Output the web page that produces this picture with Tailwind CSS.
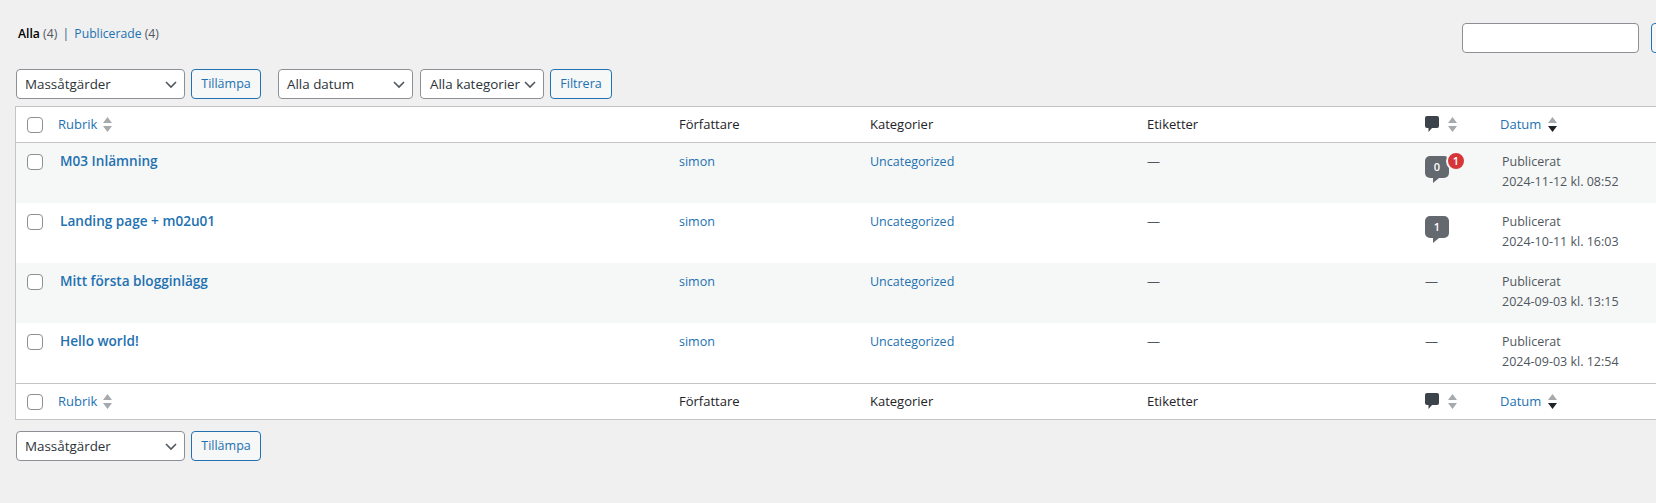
<!DOCTYPE html>
<html lang="sv">

<head>
    <meta charset="UTF-8">
    <script src="https://cdn.jsdelivr.net/npm/@tailwindcss/browser@4"></script>
    <title>Inlägg</title>
</head>

<body class="bg-[#f0f0f1] overflow-hidden h-[503px] font-['Open_Sans',sans-serif] text-[13px] text-[#3c434a]">
    <main class="w-[1731px] pl-4">
        <div class="h-[69px] flex items-start justify-between">
            <div class="mt-[24px] ml-[2px] text-[12.2px] leading-5">
                <span class="font-semibold text-black">Alla</span> <span class="text-[#50575e]">(4)</span>
                <span class="text-[#2c5f8a] mx-[2px]">|</span>
                <a class="text-[#2271b1]">Publicerade</a> <span class="text-[#50575e]">(4)</span>
            </div>
            <div class="flex gap-[12px] mt-[23px]">
                <input type="text" class="w-[177px] h-[30px] bg-white border border-[#8c8f94] rounded">
                <button class="w-[80px] h-[30px] border border-[#2271b1] rounded bg-[#f6f7f7]"></button>
            </div>
        </div>

        <div class="flex items-center h-[30px] mb-[7px]">
            <div class="w-[169px] h-[30px] bg-white border border-[#8c8f94] rounded flex items-center justify-between pl-2 pr-[7px] text-[13.4px] text-[#2c3338]">
                Massåtgärder
                <svg class="w-3 h-3" viewBox="0 0 12 12" fill="none" stroke="#50575e" stroke-width="1.6"><path d="M1 4l5 5 5-5" /></svg>
            </div>
            <button class="ml-[6px] w-[70px] h-[30px] border border-[#2271b1] rounded bg-[#f6f7f7] text-[#2271b1] text-[12.5px]">Tillämpa</button>
            <div class="ml-[17px] w-[135px] h-[30px] bg-white border border-[#8c8f94] rounded flex items-center justify-between pl-2 pr-[7px] text-[13.4px] text-[#2c3338]">
                Alla datum
                <svg class="w-3 h-3" viewBox="0 0 12 12" fill="none" stroke="#50575e" stroke-width="1.6"><path d="M1 4l5 5 5-5" /></svg>
            </div>
            <div class="ml-[7px] w-[124px] h-[30px] bg-white border border-[#8c8f94] rounded flex items-center justify-between pl-[9px] pr-[7px] text-[13.4px] text-[#2c3338]">
                Alla kategorier
                <svg class="w-3 h-3" viewBox="0 0 12 12" fill="none" stroke="#50575e" stroke-width="1.6"><path d="M1 4l5 5 5-5" /></svg>
            </div>
            <button class="ml-[6px] w-[62px] h-[30px] border border-[#2271b1] rounded bg-[#f6f7f7] text-[#2271b1] text-[12.5px]">Filtrera</button>
        </div>

        <table class="-ml-px w-[1705px] table-fixed border border-[#c3c4c7] bg-white border-separate border-spacing-0">
            <colgroup>
                <col class="w-[34px]">
                <col class="w-[621px]">
                <col class="w-[191px]">
                <col class="w-[277px]">
                <col class="w-[277px]">
                <col class="w-[76px]">
                <col>
            </colgroup>
            <thead>
                <tr class="h-[36px] text-left font-normal text-[#1d2327]">
                    <th class="border-b border-[#c3c4c7] pl-[11px]"><span class="block w-4 h-4 bg-white border border-[#8c8f94] rounded"></span></th>
                    <th class="border-b border-[#c3c4c7] pl-2 font-normal">
                        <span class="flex items-center gap-[6px] text-[#2271b1]">Rubrik
                            <svg class="w-[9px] h-[15px]" viewBox="0 0 9 15" fill="#a7aaad"><path d="M4.5 0L9 6H0zM0 9h9l-4.5 6z" /></svg>
                        </span>
                    </th>
                    <th class="border-b border-[#c3c4c7] pl-2 font-normal">Författare</th>
                    <th class="border-b border-[#c3c4c7] pl-2 font-normal">Kategorier</th>
                    <th class="border-b border-[#c3c4c7] pl-2 font-normal">Etiketter</th>
                    <th class="border-b border-[#c3c4c7] pl-[9px] font-normal">
                        <span class="flex items-center gap-[9px]">
                            <svg class="w-[14px] h-[17px]" viewBox="0 0 14 17" fill="#3c434a"><path d="M2 0h10a2 2 0 0 1 2 2v8a2 2 0 0 1-2 2H7l-3.5 4v-4H2a2 2 0 0 1-2-2V2a2 2 0 0 1 2-2z" /></svg>
                            <svg class="w-[9px] h-[15px]" viewBox="0 0 9 15" fill="#a7aaad"><path d="M4.5 0L9 6H0zM0 9h9l-4.5 6z" /></svg>
                        </span>
                    </th>
                    <th class="border-b border-[#c3c4c7] pl-2 font-normal">
                        <span class="flex items-center gap-[7px] text-[#2271b1]">Datum
                            <svg class="w-[9px] h-[15px]" viewBox="0 0 9 15"><path fill="#a7aaad" d="M4.5 0L9 6H0z" /><path fill="#1d2327" d="M0 9h9l-4.5 6z" /></svg>
                        </span>
                    </th>
                </tr>
            </thead>
            <tbody class="align-top">
                <tr class="h-[60px] bg-[#f6f7f7]">
                    <td class="pl-[11px] pt-[11px]"><span class="block w-4 h-4 bg-white border border-[#8c8f94] rounded"></span></td>
                    <td class="pl-[10px] pt-[8px] font-semibold text-[#2271b1] text-[13.6px]">M03 Inlämning</td>
                    <td class="pl-2 pt-[10px] text-[#2271b1] text-[12.5px]">simon</td>
                    <td class="pl-2 pt-[10px] text-[#2271b1] text-[12.5px]">Uncategorized</td>
                    <td class="pl-2 pt-[9px] text-[#50575e]">—</td>
                    <td class="pl-[9px] pt-[13px]">
                        <div class="relative w-6">
                            <div class="w-6 h-[22px] bg-[#646970] rounded-[5px] text-white text-[11px] font-semibold flex items-center justify-center">0</div>
                            <svg class="ml-2 w-[6px] h-[5px] block" viewBox="0 0 6 5" fill="#646970"><path d="M0 0h6L0 5z" /></svg>
                            <span class="absolute -top-[5px] left-[21px] w-5 h-5 rounded-full bg-[#d63638] border-2 border-[#f6f7f7] text-white text-[11px] font-semibold flex items-center justify-center">1</span>
                        </div>
                    </td>
                    <td class="pl-[10px] pt-[9px] text-[#50575e] text-[12.5px] leading-5">Publicerat<br>2024-11-12 kl. 08:52</td>
                </tr>
                <tr class="h-[60px] bg-white">
                    <td class="pl-[11px] pt-[11px]"><span class="block w-4 h-4 bg-white border border-[#8c8f94] rounded"></span></td>
                    <td class="pl-[10px] pt-[8px] font-semibold text-[#2271b1] text-[13.6px]">Landing page + m02u01</td>
                    <td class="pl-2 pt-[10px] text-[#2271b1] text-[12.5px]">simon</td>
                    <td class="pl-2 pt-[10px] text-[#2271b1] text-[12.5px]">Uncategorized</td>
                    <td class="pl-2 pt-[9px] text-[#50575e]">—</td>
                    <td class="pl-[9px] pt-[13px]">
                        <div class="relative w-6">
                            <div class="w-6 h-[22px] bg-[#646970] rounded-[5px] text-white text-[11px] font-semibold flex items-center justify-center">1</div>
                            <svg class="ml-2 w-[6px] h-[5px] block" viewBox="0 0 6 5" fill="#646970"><path d="M0 0h6L0 5z" /></svg>
                        </div>
                    </td>
                    <td class="pl-[10px] pt-[9px] text-[#50575e] text-[12.5px] leading-5">Publicerat<br>2024-10-11 kl. 16:03</td>
                </tr>
                <tr class="h-[60px] bg-[#f6f7f7]">
                    <td class="pl-[11px] pt-[11px]"><span class="block w-4 h-4 bg-white border border-[#8c8f94] rounded"></span></td>
                    <td class="pl-[10px] pt-[8px] font-semibold text-[#2271b1] text-[13.6px]">Mitt första blogginlägg</td>
                    <td class="pl-2 pt-[10px] text-[#2271b1] text-[12.5px]">simon</td>
                    <td class="pl-2 pt-[10px] text-[#2271b1] text-[12.5px]">Uncategorized</td>
                    <td class="pl-2 pt-[9px] text-[#50575e]">—</td>
                    <td class="pl-[9px] pt-[9px] text-[#50575e]">—</td>
                    <td class="pl-[10px] pt-[9px] text-[#50575e] text-[12.5px] leading-5">Publicerat<br>2024-09-03 kl. 13:15</td>
                </tr>
                <tr class="h-[60px] bg-white">
                    <td class="pl-[11px] pt-[11px]"><span class="block w-4 h-4 bg-white border border-[#8c8f94] rounded"></span></td>
                    <td class="pl-[10px] pt-[8px] font-semibold text-[#2271b1] text-[13.6px]">Hello world!</td>
                    <td class="pl-2 pt-[10px] text-[#2271b1] text-[12.5px]">simon</td>
                    <td class="pl-2 pt-[10px] text-[#2271b1] text-[12.5px]">Uncategorized</td>
                    <td class="pl-2 pt-[9px] text-[#50575e]">—</td>
                    <td class="pl-[9px] pt-[9px] text-[#50575e]">—</td>
                    <td class="pl-[10px] pt-[9px] text-[#50575e] text-[12.5px] leading-5">Publicerat<br>2024-09-03 kl. 12:54</td>
                </tr>
            </tbody>
            <tfoot>
                <tr class="h-[36px] text-left text-[#1d2327]">
                    <th class="border-t border-[#c3c4c7] pl-[11px]"><span class="block w-4 h-4 bg-white border border-[#8c8f94] rounded"></span></th>
                    <th class="border-t border-[#c3c4c7] pl-2 font-normal">
                        <span class="flex items-center gap-[6px] text-[#2271b1]">Rubrik
                            <svg class="w-[9px] h-[15px]" viewBox="0 0 9 15" fill="#a7aaad"><path d="M4.5 0L9 6H0zM0 9h9l-4.5 6z" /></svg>
                        </span>
                    </th>
                    <th class="border-t border-[#c3c4c7] pl-2 font-normal">Författare</th>
                    <th class="border-t border-[#c3c4c7] pl-2 font-normal">Kategorier</th>
                    <th class="border-t border-[#c3c4c7] pl-2 font-normal">Etiketter</th>
                    <th class="border-t border-[#c3c4c7] pl-[9px] font-normal">
                        <span class="flex items-center gap-[9px]">
                            <svg class="w-[14px] h-[17px]" viewBox="0 0 14 17" fill="#3c434a"><path d="M2 0h10a2 2 0 0 1 2 2v8a2 2 0 0 1-2 2H7l-3.5 4v-4H2a2 2 0 0 1-2-2V2a2 2 0 0 1 2-2z" /></svg>
                            <svg class="w-[9px] h-[15px]" viewBox="0 0 9 15" fill="#a7aaad"><path d="M4.5 0L9 6H0zM0 9h9l-4.5 6z" /></svg>
                        </span>
                    </th>
                    <th class="border-t border-[#c3c4c7] pl-2 font-normal">
                        <span class="flex items-center gap-[7px] text-[#2271b1]">Datum
                            <svg class="w-[9px] h-[15px]" viewBox="0 0 9 15"><path fill="#a7aaad" d="M4.5 0L9 6H0z" /><path fill="#1d2327" d="M0 9h9l-4.5 6z" /></svg>
                        </span>
                    </th>
                </tr>
            </tfoot>
        </table>

        <div class="flex items-center h-[30px] mt-[11px]">
            <div class="w-[169px] h-[30px] bg-white border border-[#8c8f94] rounded flex items-center justify-between pl-2 pr-[7px] text-[13.4px] text-[#2c3338]">
                Massåtgärder
                <svg class="w-3 h-3" viewBox="0 0 12 12" fill="none" stroke="#50575e" stroke-width="1.6"><path d="M1 4l5 5 5-5" /></svg>
            </div>
            <button class="ml-[6px] w-[70px] h-[30px] border border-[#2271b1] rounded bg-[#f6f7f7] text-[#2271b1] text-[12.5px]">Tillämpa</button>
        </div>
    </main>
</body>

</html>
